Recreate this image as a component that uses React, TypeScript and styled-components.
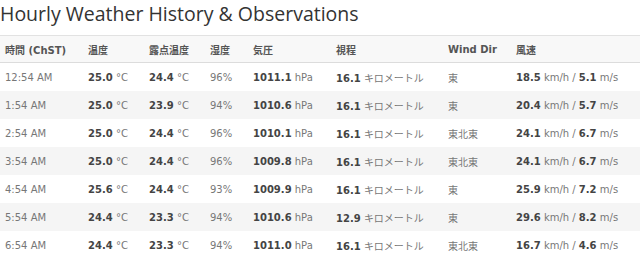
import React from 'react'
import styled, { createGlobalStyle } from 'styled-components'

const GlobalStyle = createGlobalStyle`
  html, body {
    margin: 0;
    padding: 0;
    background: #ffffff;
  }
  body {
    font-family: 'DejaVu Sans', Verdana, 'Noto Sans CJK JP', sans-serif;
  }
`

const Page = styled.div`
  width: 640px;
  height: 265px;
  overflow: hidden;
  background: #fff;
`

const Title = styled.h2`
  margin: 0;
  height: 35px;
  line-height: 27px;
  font-family: 'Open Sans', 'Noto Sans CJK JP', sans-serif;
  font-size: 19.5px;
  font-weight: 400;
  color: #333;
  white-space: nowrap;
`

const Table = styled.table`
  width: 100%;
  border-collapse: collapse;
  table-layout: fixed;
  font-size: 10px;
`

const HeadCell = styled.th`
  text-align: left;
  padding: 0 0 0 5px;
  height: 26px;
  font-weight: bold;
  color: #555;
  background: #f8f8f8;
  border-top: 1px solid #e2e2e2;
  border-bottom: 1px solid #dcdcdc;
  font-family: 'DejaVu Sans', 'Noto Sans CJK JP', sans-serif;
  white-space: nowrap;
`

const Row = styled.tr<{ $striped?: boolean }>`
  background: ${({ $striped }) => ($striped ? '#f5f5f5' : '#ffffff')};
`

const Cell = styled.td`
  padding: 0 0 0 5px;
  height: 28px;
  color: #777;
  white-space: nowrap;
  font-family: 'DejaVu Sans', 'Noto Sans CJK JP', sans-serif;
`

const Value = styled.b`
  color: #444;
  font-weight: bold;
`

const Unit = styled.span`
  color: #777;
`

type Obs = {
  time: string
  temp: string
  dew: string
  hum: string
  pres: string
  vis: string
  dir: string
  kmh: string
  ms: string
}

const rows: Obs[] = [
  { time: '12:54 AM', temp: '25.0', dew: '24.4', hum: '96%', pres: '1011.1', vis: '16.1', dir: '東', kmh: '18.5', ms: '5.1' },
  { time: '1:54 AM', temp: '25.0', dew: '23.9', hum: '94%', pres: '1010.6', vis: '16.1', dir: '東', kmh: '20.4', ms: '5.7' },
  { time: '2:54 AM', temp: '25.0', dew: '24.4', hum: '96%', pres: '1010.1', vis: '16.1', dir: '東北東', kmh: '24.1', ms: '6.7' },
  { time: '3:54 AM', temp: '25.0', dew: '24.4', hum: '96%', pres: '1009.8', vis: '16.1', dir: '東北東', kmh: '24.1', ms: '6.7' },
  { time: '4:54 AM', temp: '25.6', dew: '24.4', hum: '93%', pres: '1009.9', vis: '16.1', dir: '東', kmh: '25.9', ms: '7.2' },
  { time: '5:54 AM', temp: '24.4', dew: '23.3', hum: '94%', pres: '1010.6', vis: '12.9', dir: '東', kmh: '29.6', ms: '8.2' },
  { time: '6:54 AM', temp: '24.4', dew: '23.3', hum: '94%', pres: '1011.0', vis: '16.1', dir: '東北東', kmh: '16.7', ms: '4.6' }
]

const widths = [83, 61, 61, 43, 83, 112, 68]

export default function App() {
  return (
    <Page>
      <GlobalStyle />
      <Title>Hourly Weather History &amp; Observations</Title>
      <Table>
        <colgroup>
          {widths.map((w, i) => (
            <col key={i} style={{ width: w }} />
          ))}
          <col />
        </colgroup>
        <thead>
          <tr>
            <HeadCell>時間 (ChST)</HeadCell>
            <HeadCell>温度</HeadCell>
            <HeadCell>露点温度</HeadCell>
            <HeadCell>湿度</HeadCell>
            <HeadCell>気圧</HeadCell>
            <HeadCell>視程</HeadCell>
            <HeadCell>Wind Dir</HeadCell>
            <HeadCell>風速</HeadCell>
          </tr>
        </thead>
        <tbody>
          {rows.map((r, i) => (
            <Row key={r.time} $striped={i % 2 === 1}>
              <Cell>{r.time}</Cell>
              <Cell>
                <Value>{r.temp}</Value> <Unit>°C</Unit>
              </Cell>
              <Cell>
                <Value>{r.dew}</Value> <Unit>°C</Unit>
              </Cell>
              <Cell>{r.hum}</Cell>
              <Cell>
                <Value>{r.pres}</Value> <Unit>hPa</Unit>
              </Cell>
              <Cell>
                <Value>{r.vis}</Value> <Unit>キロメートル</Unit>
              </Cell>
              <Cell>{r.dir}</Cell>
              <Cell>
                <Value>{r.kmh}</Value> <Unit>km/h</Unit> / <Value>{r.ms}</Value> <Unit>m/s</Unit>
              </Cell>
            </Row>
          ))}
        </tbody>
      </Table>
    </Page>
  )
}
